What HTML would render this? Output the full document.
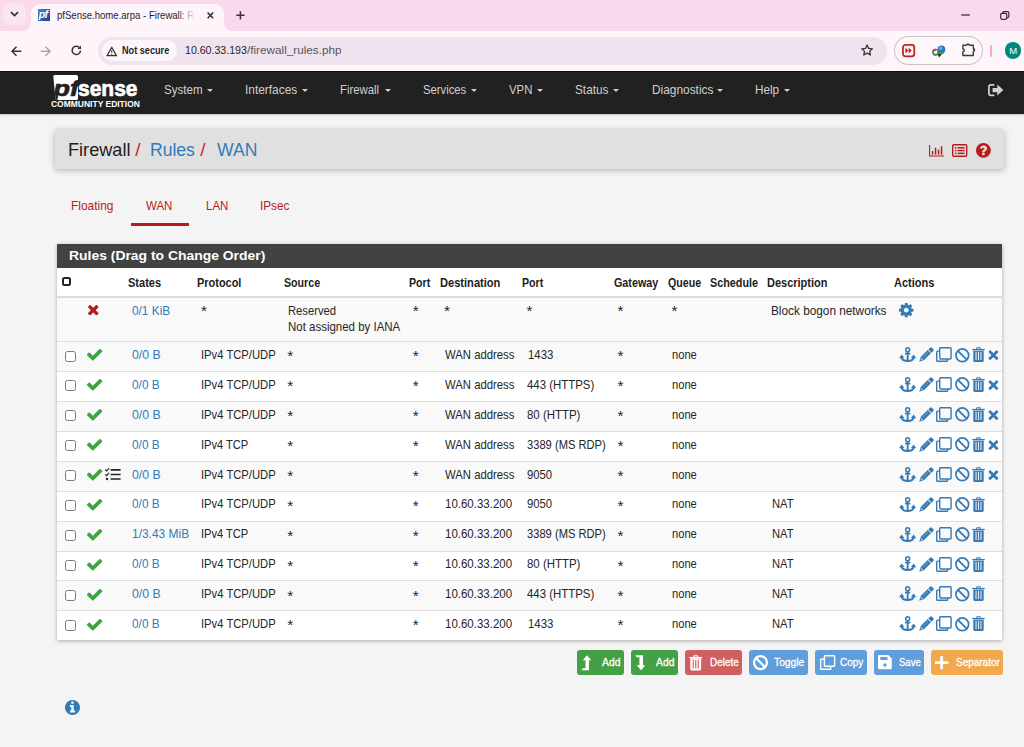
<!DOCTYPE html>
<html lang="en"><head><meta charset="utf-8"><title>pfSense.home.arpa - Firewall: Rules: WAN</title>
<style>
html,body{margin:0;padding:0}
body{width:1024px;height:747px;position:relative;overflow:hidden;background:#f4f4f4;font-family:"Liberation Sans",sans-serif;}
.t{position:absolute;white-space:pre;transform-origin:0 50%;}
.i{position:absolute;overflow:visible;display:block}
.b{position:absolute;}
/* chrome */
#strip{left:0;top:0;width:1024px;height:31px;background:#f9d9eb}
#toolbar{left:0;top:31px;width:1024px;height:40px;background:#fdf5fa;border-bottom:1.500px solid #fff;box-sizing:border-box;height:39.700px}
#tab{left:31px;top:3.700px;width:192.800px;height:27.300px;background:#fdf5fa;border-radius:9px 9px 0 0}
#tabl{left:23px;top:23px;width:8px;height:8px;background:radial-gradient(circle at 0 0,#f9d9eb 7.500px,#fdf5fa 8.200px)}
#tabr{left:223.800px;top:23px;width:8px;height:8px;background:radial-gradient(circle at 100% 0,#f9d9eb 7.500px,#fdf5fa 8.200px)}
#tsearch{left:3px;top:3px;width:23px;height:22px;border-radius:7px;background:#fbe5f1}
#omni{left:98px;top:36.500px;width:788.500px;height:28px;border-radius:14px;background:#efe3ef}
#chip{left:101.500px;top:40.200px;width:75px;height:20.600px;border-radius:10.300px;background:#fdf5fa}
#ext{left:894.500px;top:36.700px;width:87px;height:27.300px;border-radius:14px;background:#fdf6fa;box-shadow:0 0 0 1px #c9c2c6}
#avatar{left:1004.500px;top:42.200px;width:16.600px;height:16.600px;border-radius:50%;background:#00897b}
#sepv{left:990.200px;top:44.500px;width:1.300px;height:12.500px;background:#f6a9d0;border-radius:1px;width:1.600px}
/* page */
#nav{left:0;top:70.500px;width:1024px;height:43.200px;background:#212121;border-top:1px solid #0c0c0c;box-sizing:border-box;box-shadow:0 1px 2px rgba(0,0,0,.2)}
#bc{left:55.400px;top:129.800px;width:948.300px;height:39.300px;background:#e0e0e0;border-radius:3px;box-shadow:0 1px 6px rgba(0,0,0,.3)}
#tabul{left:130.500px;top:222.700px;width:58.300px;height:3.700px;background:#b71c1c}
#panel{left:56.500px;top:244px;width:945.700px;height:396.300px;background:#fff;box-shadow:0 1px 4px rgba(0,0,0,.3)}
#phead{left:56.500px;top:244px;width:945.700px;height:23.500px;background:#424242}
.row{position:absolute;left:56.500px;width:945.700px;height:30px;border-top:1px solid #ddd;box-sizing:border-box}
.g{background:#f9f9f9}
.cb{position:absolute;width:9px;height:9px;border:1px solid #7a7a7a;border-radius:2.500px;background:#fff;box-sizing:content-box}
.btn{position:absolute;top:650px;height:24.500px;border-radius:3px}
.caret{position:absolute;width:0;height:0;border-left:3.500px solid transparent;border-right:3.500px solid transparent;border-top:3.700px solid #d0d0d0;top:88.600px;margin-left:0.800px}
</style></head><body>
<!-- browser chrome -->
<div class="b" id="strip"></div>
<div class="b" id="toolbar"></div>
<div class="b" id="tsearch"></div>
<div class="b" id="tab"></div><div class="b" id="tabl"></div><div class="b" id="tabr"></div>
<div class="b" id="omni"></div><div class="b" id="chip"></div>
<div class="b" id="ext"></div><div class="b" id="sepv"></div><div class="b" id="avatar"></div>
<!-- page -->
<div class="b" id="nav"></div>
<div class="b" id="bc"></div>
<div class="b" id="tabul"></div>
<div class="b" id="panel"></div>
<div class="b" id="phead"></div>
<!--ROWS-->
<div class="row g" style="top:296px;height:45px;border-top:2px solid #ddd"></div>
<div class="row g" style="top:341.2px"></div>
<div class="cb" style="left:64.700px;top:350.5px"></div>
<div class="row" style="top:371.1px"></div>
<div class="cb" style="left:64.700px;top:380.4px"></div>
<div class="row g" style="top:401.0px"></div>
<div class="cb" style="left:64.700px;top:410.3px"></div>
<div class="row" style="top:430.9px"></div>
<div class="cb" style="left:64.700px;top:440.2px"></div>
<div class="row g" style="top:460.8px"></div>
<div class="cb" style="left:64.700px;top:470.1px"></div>
<div class="row" style="top:490.7px"></div>
<div class="cb" style="left:64.700px;top:500.0px"></div>
<div class="row g" style="top:520.6px"></div>
<div class="cb" style="left:64.700px;top:529.9px"></div>
<div class="row" style="top:550.5px"></div>
<div class="cb" style="left:64.700px;top:559.8px"></div>
<div class="row g" style="top:580.4px"></div>
<div class="cb" style="left:64.700px;top:589.7px"></div>
<div class="row" style="top:610.3px"></div>
<div class="cb" style="left:64.700px;top:619.6px"></div>
<div class="cb" style="left:62px;top:277px;width:5px;height:5px;border:2px solid #222;border-radius:2.500px"></div>
<div class="caret" style="left:206.2px"></div>
<div class="caret" style="left:301.2px"></div>
<div class="caret" style="left:384.2px"></div>
<div class="caret" style="left:470.7px"></div>
<div class="caret" style="left:536.5px"></div>
<div class="caret" style="left:612.7px"></div>
<div class="caret" style="left:716.7px"></div>
<div class="caret" style="left:783.0px"></div>
<div class="btn" style="left:576.8px;width:47.4px;background:#43a047"></div>
<div class="btn" style="left:631.0px;width:47.0px;background:#43a047"></div>
<div class="btn" style="left:685.0px;width:57.0px;background:#cf6060"></div>
<div class="btn" style="left:749.0px;width:58.7px;background:#5f9ddc"></div>
<div class="btn" style="left:815.2px;width:51.8px;background:#5f9ddc"></div>
<div class="btn" style="left:873.9px;width:50.0px;background:#5f9ddc"></div>
<div class="btn" style="left:930.8px;width:72.7px;background:#f0a94b"></div>
<svg class="i" style="left:87.50px;top:305.20px;width:10.50px;height:10.30px" viewBox="302 366 1188 1188" preserveAspectRatio="none"><path fill="#b71c1c" d="M1490 1322q0 40-28 68l-136 136q-28 28-68 28t-68-28l-294-294-294 294q-28 28-68 28t-68-28l-136-136q-28-28-28-68t28-68l294-294-294-294q-28-28-28-68t28-68l136-136q28-28 68-28t68 28l294 294 294-294q28-28 68-28t68 28l136 136q28 28 28 68t-28 68l-294 294 294 294q28 28 28 68z"/></svg>
<svg class="i" style="left:899.00px;top:303.00px;width:14.50px;height:14.30px" viewBox="128 128 1536 1536" preserveAspectRatio="none"><path fill="#337ab7" d="M1152 896q0-106-75-181t-181-75-181 75-75 181 75 181 181 75 181-75 75-181zm512-109v222q0 12-8 23t-20 13l-185 28q-19 54-39 91 35 50 107 138 10 12 10 25t-9 23q-27 37-99 108t-94 71q-12 0-26-9l-138-108q-44 23-91 38-16 136-29 186-7 28-36 28h-222q-14 0-24.500-8.500t-11.500-21.500l-28-184q-49-16-90-37l-141 107q-10 9-25 9-14 0-25-11-126-114-165-168-7-10-7-23 0-12 8-23 15-21 51-66.500t54-70.500q-27-50-41-99l-183-27q-13-2-21-12.500t-8-23.500v-222q0-12 8-23t19-13l186-28q14-46 39-92-40-57-107-138-10-12-10-24 0-10 9-23 26-36 98.500-107.500t94.500-71.500q13 0 26 10l138 107q44-23 91-38 16-136 29-186 7-28 36-28h222q14 0 24.500 8.500t11.500 21.500l28 184q49 16 90 37l142-107q9-9 24-9 13 0 25 10 129 119 165 170 7 8 7 22 0 12-8 23-15 21-51 66.500t-54 70.500q26 50 41 98l183 28q13 2 21 12.500t8 23.500z"/></svg>
<svg class="i" style="left:87.40px;top:349.40px;width:15.20px;height:11.50px" viewBox="121 334 1550 1188" preserveAspectRatio="none"><path fill="#3fa243" d="M1671 566q0 40-28 68l-724 724-136 136q-28 28-68 28t-68-28l-136-136-362-362q-28-28-28-68t28-68l136-136q28-28 68-28t68 28l294 295 656-657q28-28 68-28t68 28l136 136q28 28 28 68z"/></svg>
<svg class="i" style="left:898.80px;top:347.10px;width:17.20px;height:15.00px" viewBox="0 0 17.2 15" ><g fill="none" stroke="#337ab7"><circle cx="8.650" cy="2.700" r="1.950" stroke-width="1.500"/><path d="M8.650 4.600V14.400" stroke-width="1.900"/><path d="M6 6.550H11.300" stroke-width="1.700"/><path d="M2.500 10.300C3.100 13.400 6 14.050 8.650 14.050C11.300 14.050 14.200 13.400 14.800 10.300" stroke-width="1.900"/></g><path fill="#337ab7" d="M0 11.300L2.650 7.600L5.400 11ZM17.300 11.300L14.650 7.600L11.900 11Z"/></svg>
<svg class="i" style="left:918.60px;top:347.20px;width:15.50px;height:15.00px" viewBox="0 0 15.5 15" ><g transform="translate(0.250,14.750) rotate(-45)"><path d="M0 0L4.600 -2.300H14.200V2.300H4.600Z" fill="#337ab7"/><path d="M15.100 -2.300H17.600Q18.900 -2.300 18.900 -1V1Q18.900 2.300 17.600 2.300H15.100Z" fill="#337ab7"/><path d="M2.300 0L4.100 -0.950V0.950Z" fill="#fff"/><path d="M5.600 -0.500H13.300" stroke="#fff" stroke-width="0.600" opacity=".5"/></g></svg>
<svg class="i" style="left:936.20px;top:347.20px;width:16.00px;height:15.00px" viewBox="0 0 16 15" ><g fill="none" stroke="#337ab7" stroke-width="1.400"><rect x="3.700" y="0.700" width="11.400" height="11.300" rx="1"/><path d="M3.700 4.100H1.600Q0.700 4.100 0.700 5V13.400Q0.700 14.300 1.600 14.300H10.700Q11.600 14.300 11.600 13.400V12.100"/></g></svg>
<svg class="i" style="left:954.50px;top:347.50px;width:14.60px;height:14.60px" viewBox="0 0 14.6 14.6" ><g fill="none" stroke="#337ab7"><circle cx="7.300" cy="7.300" r="6.350" stroke-width="1.700"/><path d="M2.900 2.900L11.700 11.700" stroke-width="1.800"/></g></svg>
<svg class="i" style="left:972.20px;top:347.20px;width:13.00px;height:15.00px" viewBox="0 0 13 15" ><g fill="#337ab7"><path d="M0.300 1.900H12.700V3.200H0.300Z"/><path d="M4 1.900L4.700 0.300H8.300L9 1.900L7.900 1.900L7.600 1.200H5.400L5.100 1.900Z"/><path d="M1.300 3.200H11.700V13.600Q11.700 14.900 10.500 14.900H2.500Q1.300 14.900 1.300 13.600Z"/></g><rect x="1.300" y="3.300" width="10.400" height="0.700" fill="#fff" opacity=".55"/><g fill="#fff" opacity=".85"><rect x="3.500" y="4.800" width="1.100" height="8.300"/><rect x="5.950" y="4.800" width="1.100" height="8.300"/><rect x="8.400" y="4.800" width="1.100" height="8.300"/></g></svg>
<svg class="i" style="left:988.00px;top:350.00px;width:10.80px;height:10.20px" viewBox="0 0 10.8 10.2" ><path d="M1.200 1L9.600 9.200M9.600 1L1.200 9.200" stroke="#337ab7" stroke-width="2.700" fill="none"/></svg>
<svg class="i" style="left:87.40px;top:379.30px;width:15.20px;height:11.50px" viewBox="121 334 1550 1188" preserveAspectRatio="none"><path fill="#3fa243" d="M1671 566q0 40-28 68l-724 724-136 136q-28 28-68 28t-68-28l-136-136-362-362q-28-28-28-68t28-68l136-136q28-28 68-28t68 28l294 295 656-657q28-28 68-28t68 28l136 136q28 28 28 68z"/></svg>
<svg class="i" style="left:898.80px;top:377.00px;width:17.20px;height:15.00px" viewBox="0 0 17.2 15" ><g fill="none" stroke="#337ab7"><circle cx="8.650" cy="2.700" r="1.950" stroke-width="1.500"/><path d="M8.650 4.600V14.400" stroke-width="1.900"/><path d="M6 6.550H11.300" stroke-width="1.700"/><path d="M2.500 10.300C3.100 13.400 6 14.050 8.650 14.050C11.300 14.050 14.200 13.400 14.800 10.300" stroke-width="1.900"/></g><path fill="#337ab7" d="M0 11.300L2.650 7.600L5.400 11ZM17.300 11.300L14.650 7.600L11.900 11Z"/></svg>
<svg class="i" style="left:918.60px;top:377.10px;width:15.50px;height:15.00px" viewBox="0 0 15.5 15" ><g transform="translate(0.250,14.750) rotate(-45)"><path d="M0 0L4.600 -2.300H14.200V2.300H4.600Z" fill="#337ab7"/><path d="M15.100 -2.300H17.600Q18.900 -2.300 18.900 -1V1Q18.900 2.300 17.600 2.300H15.100Z" fill="#337ab7"/><path d="M2.300 0L4.100 -0.950V0.950Z" fill="#fff"/><path d="M5.600 -0.500H13.300" stroke="#fff" stroke-width="0.600" opacity=".5"/></g></svg>
<svg class="i" style="left:936.20px;top:377.10px;width:16.00px;height:15.00px" viewBox="0 0 16 15" ><g fill="none" stroke="#337ab7" stroke-width="1.400"><rect x="3.700" y="0.700" width="11.400" height="11.300" rx="1"/><path d="M3.700 4.100H1.600Q0.700 4.100 0.700 5V13.400Q0.700 14.300 1.600 14.300H10.700Q11.600 14.300 11.600 13.400V12.100"/></g></svg>
<svg class="i" style="left:954.50px;top:377.40px;width:14.60px;height:14.60px" viewBox="0 0 14.6 14.6" ><g fill="none" stroke="#337ab7"><circle cx="7.300" cy="7.300" r="6.350" stroke-width="1.700"/><path d="M2.900 2.900L11.700 11.700" stroke-width="1.800"/></g></svg>
<svg class="i" style="left:972.20px;top:377.10px;width:13.00px;height:15.00px" viewBox="0 0 13 15" ><g fill="#337ab7"><path d="M0.300 1.900H12.700V3.200H0.300Z"/><path d="M4 1.900L4.700 0.300H8.300L9 1.900L7.900 1.900L7.600 1.200H5.400L5.100 1.900Z"/><path d="M1.300 3.200H11.700V13.600Q11.700 14.900 10.500 14.900H2.500Q1.300 14.900 1.300 13.600Z"/></g><rect x="1.300" y="3.300" width="10.400" height="0.700" fill="#fff" opacity=".55"/><g fill="#fff" opacity=".85"><rect x="3.500" y="4.800" width="1.100" height="8.300"/><rect x="5.950" y="4.800" width="1.100" height="8.300"/><rect x="8.400" y="4.800" width="1.100" height="8.300"/></g></svg>
<svg class="i" style="left:988.00px;top:379.90px;width:10.80px;height:10.20px" viewBox="0 0 10.8 10.2" ><path d="M1.200 1L9.600 9.200M9.600 1L1.200 9.200" stroke="#337ab7" stroke-width="2.700" fill="none"/></svg>
<svg class="i" style="left:87.40px;top:409.20px;width:15.20px;height:11.50px" viewBox="121 334 1550 1188" preserveAspectRatio="none"><path fill="#3fa243" d="M1671 566q0 40-28 68l-724 724-136 136q-28 28-68 28t-68-28l-136-136-362-362q-28-28-28-68t28-68l136-136q28-28 68-28t68 28l294 295 656-657q28-28 68-28t68 28l136 136q28 28 28 68z"/></svg>
<svg class="i" style="left:898.80px;top:406.90px;width:17.20px;height:15.00px" viewBox="0 0 17.2 15" ><g fill="none" stroke="#337ab7"><circle cx="8.650" cy="2.700" r="1.950" stroke-width="1.500"/><path d="M8.650 4.600V14.400" stroke-width="1.900"/><path d="M6 6.550H11.300" stroke-width="1.700"/><path d="M2.500 10.300C3.100 13.400 6 14.050 8.650 14.050C11.300 14.050 14.200 13.400 14.800 10.300" stroke-width="1.900"/></g><path fill="#337ab7" d="M0 11.300L2.650 7.600L5.400 11ZM17.300 11.300L14.650 7.600L11.900 11Z"/></svg>
<svg class="i" style="left:918.60px;top:407.00px;width:15.50px;height:15.00px" viewBox="0 0 15.5 15" ><g transform="translate(0.250,14.750) rotate(-45)"><path d="M0 0L4.600 -2.300H14.200V2.300H4.600Z" fill="#337ab7"/><path d="M15.100 -2.300H17.600Q18.900 -2.300 18.900 -1V1Q18.900 2.300 17.600 2.300H15.100Z" fill="#337ab7"/><path d="M2.300 0L4.100 -0.950V0.950Z" fill="#fff"/><path d="M5.600 -0.500H13.300" stroke="#fff" stroke-width="0.600" opacity=".5"/></g></svg>
<svg class="i" style="left:936.20px;top:407.00px;width:16.00px;height:15.00px" viewBox="0 0 16 15" ><g fill="none" stroke="#337ab7" stroke-width="1.400"><rect x="3.700" y="0.700" width="11.400" height="11.300" rx="1"/><path d="M3.700 4.100H1.600Q0.700 4.100 0.700 5V13.400Q0.700 14.300 1.600 14.300H10.700Q11.600 14.300 11.600 13.400V12.100"/></g></svg>
<svg class="i" style="left:954.50px;top:407.30px;width:14.60px;height:14.60px" viewBox="0 0 14.6 14.6" ><g fill="none" stroke="#337ab7"><circle cx="7.300" cy="7.300" r="6.350" stroke-width="1.700"/><path d="M2.900 2.900L11.700 11.700" stroke-width="1.800"/></g></svg>
<svg class="i" style="left:972.20px;top:407.00px;width:13.00px;height:15.00px" viewBox="0 0 13 15" ><g fill="#337ab7"><path d="M0.300 1.900H12.700V3.200H0.300Z"/><path d="M4 1.900L4.700 0.300H8.300L9 1.900L7.900 1.900L7.600 1.200H5.400L5.100 1.900Z"/><path d="M1.300 3.200H11.700V13.600Q11.700 14.900 10.500 14.900H2.500Q1.300 14.900 1.300 13.600Z"/></g><rect x="1.300" y="3.300" width="10.400" height="0.700" fill="#fff" opacity=".55"/><g fill="#fff" opacity=".85"><rect x="3.500" y="4.800" width="1.100" height="8.300"/><rect x="5.950" y="4.800" width="1.100" height="8.300"/><rect x="8.400" y="4.800" width="1.100" height="8.300"/></g></svg>
<svg class="i" style="left:988.00px;top:409.80px;width:10.80px;height:10.20px" viewBox="0 0 10.8 10.2" ><path d="M1.200 1L9.600 9.200M9.600 1L1.200 9.200" stroke="#337ab7" stroke-width="2.700" fill="none"/></svg>
<svg class="i" style="left:87.40px;top:439.10px;width:15.20px;height:11.50px" viewBox="121 334 1550 1188" preserveAspectRatio="none"><path fill="#3fa243" d="M1671 566q0 40-28 68l-724 724-136 136q-28 28-68 28t-68-28l-136-136-362-362q-28-28-28-68t28-68l136-136q28-28 68-28t68 28l294 295 656-657q28-28 68-28t68 28l136 136q28 28 28 68z"/></svg>
<svg class="i" style="left:898.80px;top:436.80px;width:17.20px;height:15.00px" viewBox="0 0 17.2 15" ><g fill="none" stroke="#337ab7"><circle cx="8.650" cy="2.700" r="1.950" stroke-width="1.500"/><path d="M8.650 4.600V14.400" stroke-width="1.900"/><path d="M6 6.550H11.300" stroke-width="1.700"/><path d="M2.500 10.300C3.100 13.400 6 14.050 8.650 14.050C11.300 14.050 14.200 13.400 14.800 10.300" stroke-width="1.900"/></g><path fill="#337ab7" d="M0 11.300L2.650 7.600L5.400 11ZM17.300 11.300L14.650 7.600L11.900 11Z"/></svg>
<svg class="i" style="left:918.60px;top:436.90px;width:15.50px;height:15.00px" viewBox="0 0 15.5 15" ><g transform="translate(0.250,14.750) rotate(-45)"><path d="M0 0L4.600 -2.300H14.200V2.300H4.600Z" fill="#337ab7"/><path d="M15.100 -2.300H17.600Q18.900 -2.300 18.900 -1V1Q18.900 2.300 17.600 2.300H15.100Z" fill="#337ab7"/><path d="M2.300 0L4.100 -0.950V0.950Z" fill="#fff"/><path d="M5.600 -0.500H13.300" stroke="#fff" stroke-width="0.600" opacity=".5"/></g></svg>
<svg class="i" style="left:936.20px;top:436.90px;width:16.00px;height:15.00px" viewBox="0 0 16 15" ><g fill="none" stroke="#337ab7" stroke-width="1.400"><rect x="3.700" y="0.700" width="11.400" height="11.300" rx="1"/><path d="M3.700 4.100H1.600Q0.700 4.100 0.700 5V13.400Q0.700 14.300 1.600 14.300H10.700Q11.600 14.300 11.600 13.400V12.100"/></g></svg>
<svg class="i" style="left:954.50px;top:437.20px;width:14.60px;height:14.60px" viewBox="0 0 14.6 14.6" ><g fill="none" stroke="#337ab7"><circle cx="7.300" cy="7.300" r="6.350" stroke-width="1.700"/><path d="M2.900 2.900L11.700 11.700" stroke-width="1.800"/></g></svg>
<svg class="i" style="left:972.20px;top:436.90px;width:13.00px;height:15.00px" viewBox="0 0 13 15" ><g fill="#337ab7"><path d="M0.300 1.900H12.700V3.200H0.300Z"/><path d="M4 1.900L4.700 0.300H8.300L9 1.900L7.900 1.900L7.600 1.200H5.400L5.100 1.900Z"/><path d="M1.300 3.200H11.700V13.600Q11.700 14.900 10.500 14.900H2.500Q1.300 14.900 1.300 13.600Z"/></g><rect x="1.300" y="3.300" width="10.400" height="0.700" fill="#fff" opacity=".55"/><g fill="#fff" opacity=".85"><rect x="3.500" y="4.800" width="1.100" height="8.300"/><rect x="5.950" y="4.800" width="1.100" height="8.300"/><rect x="8.400" y="4.800" width="1.100" height="8.300"/></g></svg>
<svg class="i" style="left:988.00px;top:439.70px;width:10.80px;height:10.20px" viewBox="0 0 10.8 10.2" ><path d="M1.200 1L9.600 9.200M9.600 1L1.200 9.200" stroke="#337ab7" stroke-width="2.700" fill="none"/></svg>
<svg class="i" style="left:87.40px;top:469.00px;width:15.20px;height:11.50px" viewBox="121 334 1550 1188" preserveAspectRatio="none"><path fill="#3fa243" d="M1671 566q0 40-28 68l-724 724-136 136q-28 28-68 28t-68-28l-136-136-362-362q-28-28-28-68t28-68l136-136q28-28 68-28t68 28l294 295 656-657q28-28 68-28t68 28l136 136q28 28 28 68z"/></svg>
<svg class="i" style="left:898.80px;top:466.70px;width:17.20px;height:15.00px" viewBox="0 0 17.2 15" ><g fill="none" stroke="#337ab7"><circle cx="8.650" cy="2.700" r="1.950" stroke-width="1.500"/><path d="M8.650 4.600V14.400" stroke-width="1.900"/><path d="M6 6.550H11.300" stroke-width="1.700"/><path d="M2.500 10.300C3.100 13.400 6 14.050 8.650 14.050C11.300 14.050 14.200 13.400 14.800 10.300" stroke-width="1.900"/></g><path fill="#337ab7" d="M0 11.300L2.650 7.600L5.400 11ZM17.300 11.300L14.650 7.600L11.900 11Z"/></svg>
<svg class="i" style="left:918.60px;top:466.80px;width:15.50px;height:15.00px" viewBox="0 0 15.5 15" ><g transform="translate(0.250,14.750) rotate(-45)"><path d="M0 0L4.600 -2.300H14.200V2.300H4.600Z" fill="#337ab7"/><path d="M15.100 -2.300H17.600Q18.900 -2.300 18.900 -1V1Q18.900 2.300 17.600 2.300H15.100Z" fill="#337ab7"/><path d="M2.300 0L4.100 -0.950V0.950Z" fill="#fff"/><path d="M5.600 -0.500H13.300" stroke="#fff" stroke-width="0.600" opacity=".5"/></g></svg>
<svg class="i" style="left:936.20px;top:466.80px;width:16.00px;height:15.00px" viewBox="0 0 16 15" ><g fill="none" stroke="#337ab7" stroke-width="1.400"><rect x="3.700" y="0.700" width="11.400" height="11.300" rx="1"/><path d="M3.700 4.100H1.600Q0.700 4.100 0.700 5V13.400Q0.700 14.300 1.600 14.300H10.700Q11.600 14.300 11.600 13.400V12.100"/></g></svg>
<svg class="i" style="left:954.50px;top:467.10px;width:14.60px;height:14.60px" viewBox="0 0 14.6 14.6" ><g fill="none" stroke="#337ab7"><circle cx="7.300" cy="7.300" r="6.350" stroke-width="1.700"/><path d="M2.900 2.900L11.700 11.700" stroke-width="1.800"/></g></svg>
<svg class="i" style="left:972.20px;top:466.80px;width:13.00px;height:15.00px" viewBox="0 0 13 15" ><g fill="#337ab7"><path d="M0.300 1.900H12.700V3.200H0.300Z"/><path d="M4 1.900L4.700 0.300H8.300L9 1.900L7.900 1.900L7.600 1.200H5.400L5.100 1.900Z"/><path d="M1.300 3.200H11.700V13.600Q11.700 14.900 10.500 14.900H2.500Q1.300 14.900 1.300 13.600Z"/></g><rect x="1.300" y="3.300" width="10.400" height="0.700" fill="#fff" opacity=".55"/><g fill="#fff" opacity=".85"><rect x="3.500" y="4.800" width="1.100" height="8.300"/><rect x="5.950" y="4.800" width="1.100" height="8.300"/><rect x="8.400" y="4.800" width="1.100" height="8.300"/></g></svg>
<svg class="i" style="left:988.00px;top:469.60px;width:10.80px;height:10.20px" viewBox="0 0 10.8 10.2" ><path d="M1.200 1L9.600 9.200M9.600 1L1.200 9.200" stroke="#337ab7" stroke-width="2.700" fill="none"/></svg>
<svg class="i" style="left:87.40px;top:498.90px;width:15.20px;height:11.50px" viewBox="121 334 1550 1188" preserveAspectRatio="none"><path fill="#3fa243" d="M1671 566q0 40-28 68l-724 724-136 136q-28 28-68 28t-68-28l-136-136-362-362q-28-28-28-68t28-68l136-136q28-28 68-28t68 28l294 295 656-657q28-28 68-28t68 28l136 136q28 28 28 68z"/></svg>
<svg class="i" style="left:898.80px;top:496.60px;width:17.20px;height:15.00px" viewBox="0 0 17.2 15" ><g fill="none" stroke="#337ab7"><circle cx="8.650" cy="2.700" r="1.950" stroke-width="1.500"/><path d="M8.650 4.600V14.400" stroke-width="1.900"/><path d="M6 6.550H11.300" stroke-width="1.700"/><path d="M2.500 10.300C3.100 13.400 6 14.050 8.650 14.050C11.300 14.050 14.200 13.400 14.800 10.300" stroke-width="1.900"/></g><path fill="#337ab7" d="M0 11.300L2.650 7.600L5.400 11ZM17.300 11.300L14.650 7.600L11.900 11Z"/></svg>
<svg class="i" style="left:918.60px;top:496.70px;width:15.50px;height:15.00px" viewBox="0 0 15.5 15" ><g transform="translate(0.250,14.750) rotate(-45)"><path d="M0 0L4.600 -2.300H14.200V2.300H4.600Z" fill="#337ab7"/><path d="M15.100 -2.300H17.600Q18.900 -2.300 18.900 -1V1Q18.900 2.300 17.600 2.300H15.100Z" fill="#337ab7"/><path d="M2.300 0L4.100 -0.950V0.950Z" fill="#fff"/><path d="M5.600 -0.500H13.300" stroke="#fff" stroke-width="0.600" opacity=".5"/></g></svg>
<svg class="i" style="left:936.20px;top:496.70px;width:16.00px;height:15.00px" viewBox="0 0 16 15" ><g fill="none" stroke="#337ab7" stroke-width="1.400"><rect x="3.700" y="0.700" width="11.400" height="11.300" rx="1"/><path d="M3.700 4.100H1.600Q0.700 4.100 0.700 5V13.400Q0.700 14.300 1.600 14.300H10.700Q11.600 14.300 11.600 13.400V12.100"/></g></svg>
<svg class="i" style="left:954.50px;top:497.00px;width:14.60px;height:14.60px" viewBox="0 0 14.6 14.6" ><g fill="none" stroke="#337ab7"><circle cx="7.300" cy="7.300" r="6.350" stroke-width="1.700"/><path d="M2.900 2.900L11.700 11.700" stroke-width="1.800"/></g></svg>
<svg class="i" style="left:972.20px;top:496.70px;width:13.00px;height:15.00px" viewBox="0 0 13 15" ><g fill="#337ab7"><path d="M0.300 1.900H12.700V3.200H0.300Z"/><path d="M4 1.900L4.700 0.300H8.300L9 1.900L7.900 1.900L7.600 1.200H5.400L5.100 1.900Z"/><path d="M1.300 3.200H11.700V13.600Q11.700 14.900 10.500 14.900H2.500Q1.300 14.900 1.300 13.600Z"/></g><rect x="1.300" y="3.300" width="10.400" height="0.700" fill="#fff" opacity=".55"/><g fill="#fff" opacity=".85"><rect x="3.500" y="4.800" width="1.100" height="8.300"/><rect x="5.950" y="4.800" width="1.100" height="8.300"/><rect x="8.400" y="4.800" width="1.100" height="8.300"/></g></svg>
<svg class="i" style="left:87.40px;top:528.80px;width:15.20px;height:11.50px" viewBox="121 334 1550 1188" preserveAspectRatio="none"><path fill="#3fa243" d="M1671 566q0 40-28 68l-724 724-136 136q-28 28-68 28t-68-28l-136-136-362-362q-28-28-28-68t28-68l136-136q28-28 68-28t68 28l294 295 656-657q28-28 68-28t68 28l136 136q28 28 28 68z"/></svg>
<svg class="i" style="left:898.80px;top:526.50px;width:17.20px;height:15.00px" viewBox="0 0 17.2 15" ><g fill="none" stroke="#337ab7"><circle cx="8.650" cy="2.700" r="1.950" stroke-width="1.500"/><path d="M8.650 4.600V14.400" stroke-width="1.900"/><path d="M6 6.550H11.300" stroke-width="1.700"/><path d="M2.500 10.300C3.100 13.400 6 14.050 8.650 14.050C11.300 14.050 14.200 13.400 14.800 10.300" stroke-width="1.900"/></g><path fill="#337ab7" d="M0 11.300L2.650 7.600L5.400 11ZM17.300 11.300L14.650 7.600L11.900 11Z"/></svg>
<svg class="i" style="left:918.60px;top:526.60px;width:15.50px;height:15.00px" viewBox="0 0 15.5 15" ><g transform="translate(0.250,14.750) rotate(-45)"><path d="M0 0L4.600 -2.300H14.200V2.300H4.600Z" fill="#337ab7"/><path d="M15.100 -2.300H17.600Q18.900 -2.300 18.900 -1V1Q18.900 2.300 17.600 2.300H15.100Z" fill="#337ab7"/><path d="M2.300 0L4.100 -0.950V0.950Z" fill="#fff"/><path d="M5.600 -0.500H13.300" stroke="#fff" stroke-width="0.600" opacity=".5"/></g></svg>
<svg class="i" style="left:936.20px;top:526.60px;width:16.00px;height:15.00px" viewBox="0 0 16 15" ><g fill="none" stroke="#337ab7" stroke-width="1.400"><rect x="3.700" y="0.700" width="11.400" height="11.300" rx="1"/><path d="M3.700 4.100H1.600Q0.700 4.100 0.700 5V13.400Q0.700 14.300 1.600 14.300H10.700Q11.600 14.300 11.600 13.400V12.100"/></g></svg>
<svg class="i" style="left:954.50px;top:526.90px;width:14.60px;height:14.60px" viewBox="0 0 14.6 14.6" ><g fill="none" stroke="#337ab7"><circle cx="7.300" cy="7.300" r="6.350" stroke-width="1.700"/><path d="M2.900 2.900L11.700 11.700" stroke-width="1.800"/></g></svg>
<svg class="i" style="left:972.20px;top:526.60px;width:13.00px;height:15.00px" viewBox="0 0 13 15" ><g fill="#337ab7"><path d="M0.300 1.900H12.700V3.200H0.300Z"/><path d="M4 1.900L4.700 0.300H8.300L9 1.900L7.900 1.900L7.600 1.200H5.400L5.100 1.900Z"/><path d="M1.300 3.200H11.700V13.600Q11.700 14.900 10.500 14.900H2.500Q1.300 14.900 1.300 13.600Z"/></g><rect x="1.300" y="3.300" width="10.400" height="0.700" fill="#fff" opacity=".55"/><g fill="#fff" opacity=".85"><rect x="3.500" y="4.800" width="1.100" height="8.300"/><rect x="5.950" y="4.800" width="1.100" height="8.300"/><rect x="8.400" y="4.800" width="1.100" height="8.300"/></g></svg>
<svg class="i" style="left:87.40px;top:558.70px;width:15.20px;height:11.50px" viewBox="121 334 1550 1188" preserveAspectRatio="none"><path fill="#3fa243" d="M1671 566q0 40-28 68l-724 724-136 136q-28 28-68 28t-68-28l-136-136-362-362q-28-28-28-68t28-68l136-136q28-28 68-28t68 28l294 295 656-657q28-28 68-28t68 28l136 136q28 28 28 68z"/></svg>
<svg class="i" style="left:898.80px;top:556.40px;width:17.20px;height:15.00px" viewBox="0 0 17.2 15" ><g fill="none" stroke="#337ab7"><circle cx="8.650" cy="2.700" r="1.950" stroke-width="1.500"/><path d="M8.650 4.600V14.400" stroke-width="1.900"/><path d="M6 6.550H11.300" stroke-width="1.700"/><path d="M2.500 10.300C3.100 13.400 6 14.050 8.650 14.050C11.300 14.050 14.200 13.400 14.800 10.300" stroke-width="1.900"/></g><path fill="#337ab7" d="M0 11.300L2.650 7.600L5.400 11ZM17.300 11.300L14.650 7.600L11.900 11Z"/></svg>
<svg class="i" style="left:918.60px;top:556.50px;width:15.50px;height:15.00px" viewBox="0 0 15.5 15" ><g transform="translate(0.250,14.750) rotate(-45)"><path d="M0 0L4.600 -2.300H14.200V2.300H4.600Z" fill="#337ab7"/><path d="M15.100 -2.300H17.600Q18.900 -2.300 18.900 -1V1Q18.900 2.300 17.600 2.300H15.100Z" fill="#337ab7"/><path d="M2.300 0L4.100 -0.950V0.950Z" fill="#fff"/><path d="M5.600 -0.500H13.300" stroke="#fff" stroke-width="0.600" opacity=".5"/></g></svg>
<svg class="i" style="left:936.20px;top:556.50px;width:16.00px;height:15.00px" viewBox="0 0 16 15" ><g fill="none" stroke="#337ab7" stroke-width="1.400"><rect x="3.700" y="0.700" width="11.400" height="11.300" rx="1"/><path d="M3.700 4.100H1.600Q0.700 4.100 0.700 5V13.400Q0.700 14.300 1.600 14.300H10.700Q11.600 14.300 11.600 13.400V12.100"/></g></svg>
<svg class="i" style="left:954.50px;top:556.80px;width:14.60px;height:14.60px" viewBox="0 0 14.6 14.6" ><g fill="none" stroke="#337ab7"><circle cx="7.300" cy="7.300" r="6.350" stroke-width="1.700"/><path d="M2.900 2.900L11.700 11.700" stroke-width="1.800"/></g></svg>
<svg class="i" style="left:972.20px;top:556.50px;width:13.00px;height:15.00px" viewBox="0 0 13 15" ><g fill="#337ab7"><path d="M0.300 1.900H12.700V3.200H0.300Z"/><path d="M4 1.900L4.700 0.300H8.300L9 1.900L7.900 1.900L7.600 1.200H5.400L5.100 1.900Z"/><path d="M1.300 3.200H11.700V13.600Q11.700 14.900 10.500 14.900H2.500Q1.300 14.900 1.300 13.600Z"/></g><rect x="1.300" y="3.300" width="10.400" height="0.700" fill="#fff" opacity=".55"/><g fill="#fff" opacity=".85"><rect x="3.500" y="4.800" width="1.100" height="8.300"/><rect x="5.950" y="4.800" width="1.100" height="8.300"/><rect x="8.400" y="4.800" width="1.100" height="8.300"/></g></svg>
<svg class="i" style="left:87.40px;top:588.60px;width:15.20px;height:11.50px" viewBox="121 334 1550 1188" preserveAspectRatio="none"><path fill="#3fa243" d="M1671 566q0 40-28 68l-724 724-136 136q-28 28-68 28t-68-28l-136-136-362-362q-28-28-28-68t28-68l136-136q28-28 68-28t68 28l294 295 656-657q28-28 68-28t68 28l136 136q28 28 28 68z"/></svg>
<svg class="i" style="left:898.80px;top:586.30px;width:17.20px;height:15.00px" viewBox="0 0 17.2 15" ><g fill="none" stroke="#337ab7"><circle cx="8.650" cy="2.700" r="1.950" stroke-width="1.500"/><path d="M8.650 4.600V14.400" stroke-width="1.900"/><path d="M6 6.550H11.300" stroke-width="1.700"/><path d="M2.500 10.300C3.100 13.400 6 14.050 8.650 14.050C11.300 14.050 14.200 13.400 14.800 10.300" stroke-width="1.900"/></g><path fill="#337ab7" d="M0 11.300L2.650 7.600L5.400 11ZM17.300 11.300L14.650 7.600L11.900 11Z"/></svg>
<svg class="i" style="left:918.60px;top:586.40px;width:15.50px;height:15.00px" viewBox="0 0 15.5 15" ><g transform="translate(0.250,14.750) rotate(-45)"><path d="M0 0L4.600 -2.300H14.200V2.300H4.600Z" fill="#337ab7"/><path d="M15.100 -2.300H17.600Q18.900 -2.300 18.900 -1V1Q18.900 2.300 17.600 2.300H15.100Z" fill="#337ab7"/><path d="M2.300 0L4.100 -0.950V0.950Z" fill="#fff"/><path d="M5.600 -0.500H13.300" stroke="#fff" stroke-width="0.600" opacity=".5"/></g></svg>
<svg class="i" style="left:936.20px;top:586.40px;width:16.00px;height:15.00px" viewBox="0 0 16 15" ><g fill="none" stroke="#337ab7" stroke-width="1.400"><rect x="3.700" y="0.700" width="11.400" height="11.300" rx="1"/><path d="M3.700 4.100H1.600Q0.700 4.100 0.700 5V13.400Q0.700 14.300 1.600 14.300H10.700Q11.600 14.300 11.600 13.400V12.100"/></g></svg>
<svg class="i" style="left:954.50px;top:586.70px;width:14.60px;height:14.60px" viewBox="0 0 14.6 14.6" ><g fill="none" stroke="#337ab7"><circle cx="7.300" cy="7.300" r="6.350" stroke-width="1.700"/><path d="M2.900 2.900L11.700 11.700" stroke-width="1.800"/></g></svg>
<svg class="i" style="left:972.20px;top:586.40px;width:13.00px;height:15.00px" viewBox="0 0 13 15" ><g fill="#337ab7"><path d="M0.300 1.900H12.700V3.200H0.300Z"/><path d="M4 1.900L4.700 0.300H8.300L9 1.900L7.900 1.900L7.600 1.200H5.400L5.100 1.900Z"/><path d="M1.300 3.200H11.700V13.600Q11.700 14.900 10.500 14.900H2.500Q1.300 14.900 1.300 13.600Z"/></g><rect x="1.300" y="3.300" width="10.400" height="0.700" fill="#fff" opacity=".55"/><g fill="#fff" opacity=".85"><rect x="3.500" y="4.800" width="1.100" height="8.300"/><rect x="5.950" y="4.800" width="1.100" height="8.300"/><rect x="8.400" y="4.800" width="1.100" height="8.300"/></g></svg>
<svg class="i" style="left:87.40px;top:618.50px;width:15.20px;height:11.50px" viewBox="121 334 1550 1188" preserveAspectRatio="none"><path fill="#3fa243" d="M1671 566q0 40-28 68l-724 724-136 136q-28 28-68 28t-68-28l-136-136-362-362q-28-28-28-68t28-68l136-136q28-28 68-28t68 28l294 295 656-657q28-28 68-28t68 28l136 136q28 28 28 68z"/></svg>
<svg class="i" style="left:898.80px;top:616.20px;width:17.20px;height:15.00px" viewBox="0 0 17.2 15" ><g fill="none" stroke="#337ab7"><circle cx="8.650" cy="2.700" r="1.950" stroke-width="1.500"/><path d="M8.650 4.600V14.400" stroke-width="1.900"/><path d="M6 6.550H11.300" stroke-width="1.700"/><path d="M2.500 10.300C3.100 13.400 6 14.050 8.650 14.050C11.300 14.050 14.200 13.400 14.800 10.300" stroke-width="1.900"/></g><path fill="#337ab7" d="M0 11.300L2.650 7.600L5.400 11ZM17.300 11.300L14.650 7.600L11.900 11Z"/></svg>
<svg class="i" style="left:918.60px;top:616.30px;width:15.50px;height:15.00px" viewBox="0 0 15.5 15" ><g transform="translate(0.250,14.750) rotate(-45)"><path d="M0 0L4.600 -2.300H14.200V2.300H4.600Z" fill="#337ab7"/><path d="M15.100 -2.300H17.600Q18.900 -2.300 18.900 -1V1Q18.900 2.300 17.600 2.300H15.100Z" fill="#337ab7"/><path d="M2.300 0L4.100 -0.950V0.950Z" fill="#fff"/><path d="M5.600 -0.500H13.300" stroke="#fff" stroke-width="0.600" opacity=".5"/></g></svg>
<svg class="i" style="left:936.20px;top:616.30px;width:16.00px;height:15.00px" viewBox="0 0 16 15" ><g fill="none" stroke="#337ab7" stroke-width="1.400"><rect x="3.700" y="0.700" width="11.400" height="11.300" rx="1"/><path d="M3.700 4.100H1.600Q0.700 4.100 0.700 5V13.400Q0.700 14.300 1.600 14.300H10.700Q11.600 14.300 11.600 13.400V12.100"/></g></svg>
<svg class="i" style="left:954.50px;top:616.60px;width:14.60px;height:14.60px" viewBox="0 0 14.6 14.6" ><g fill="none" stroke="#337ab7"><circle cx="7.300" cy="7.300" r="6.350" stroke-width="1.700"/><path d="M2.900 2.900L11.700 11.700" stroke-width="1.800"/></g></svg>
<svg class="i" style="left:972.20px;top:616.30px;width:13.00px;height:15.00px" viewBox="0 0 13 15" ><g fill="#337ab7"><path d="M0.300 1.900H12.700V3.200H0.300Z"/><path d="M4 1.900L4.700 0.300H8.300L9 1.900L7.900 1.900L7.600 1.200H5.400L5.100 1.900Z"/><path d="M1.300 3.200H11.700V13.600Q11.700 14.900 10.500 14.900H2.500Q1.300 14.900 1.300 13.600Z"/></g><rect x="1.300" y="3.300" width="10.400" height="0.700" fill="#fff" opacity=".55"/><g fill="#fff" opacity=".85"><rect x="3.500" y="4.800" width="1.100" height="8.300"/><rect x="5.950" y="4.800" width="1.100" height="8.300"/><rect x="8.400" y="4.800" width="1.100" height="8.300"/></g></svg>
<svg class="i" style="left:976.00px;top:143.20px;width:14.80px;height:14.80px" viewBox="128 128 1536 1536" preserveAspectRatio="none"><path fill="#b71c1c" d="M1024 1376v-192q0-14-9-23t-23-9h-192q-14 0-23 9t-9 23v192q0 14 9 23t23 9h192q14 0 23-9t9-23zm256-672q0-88-55.500-163t-138.500-116-170-41q-243 0-371 213-15 24 8 42l132 100q7 6 19 6 16 0 25-12 53-68 86-92 34-24 86-24 48 0 85.500 26t37.500 59q0 38-20 61t-68 45q-63 28-115.500 86.500t-52.500 125.500v36q0 14 9 23t23 9h192q14 0 23-9t9-23q0-19 21.500-49.500t54.500-49.500q32-18 49-28.500t46-35 44.500-48 28-60.500 12.500-81zm384 192q0 209-103 385.500t-279.500 279.500-385.500 103-385.500-103-279.500-279.500-103-385.500 103-385.500 279.500-279.500 385.500-103 385.500 103 279.500 279.500 103 385.500z"/></svg>
<svg class="i" style="left:64.50px;top:699.50px;width:15.00px;height:15.00px" viewBox="128 128 1536 1536" preserveAspectRatio="none"><path fill="#337ab7" d="M1152 1376v-160q0-14-9-23t-23-9h-96v-512q0-14-9-23t-23-9h-320q-14 0-23 9t-9 23v160q0 14 9 23t23 9h96v320h-96q-14 0-23 9t-9 23v160q0 14 9 23t23 9h448q14 0 23-9t9-23zm-128-896v-160q0-14-9-23t-23-9h-192q-14 0-23 9t-9 23v160q0 14 9 23t23 9h192q14 0 23-9t9-23zm640 416q0 209-103 385.500t-279.500 279.500-385.500 103-385.500-103-279.500-279.500-103-385.500 103-385.500 279.500-279.500 385.500-103 385.500 103 279.500 279.500 103 385.500z"/></svg>
<svg class="i" style="left:105.40px;top:468.20px;width:16.00px;height:13.00px" viewBox="0 0 16 13" ><g stroke="#222" stroke-width="1.7" fill="none"><path d="M5.600 1.900H15.600M5.600 6.500H15.600M5.600 11H15.600"/></g><g stroke="#222" stroke-width="1.200" fill="none"><path d="M0.300 1.700L1.600 3L4.100 0.300M0.300 6.300L1.600 7.600L4.100 4.900"/></g><circle cx="2" cy="11" r="1.200" fill="#222"/></svg>
<svg class="i" style="left:929.00px;top:144.50px;width:15.00px;height:12.00px" viewBox="0 0 15 12" ><g fill="#b71c1c"><path d="M0 0H1.100V10.500H15V11.600H0Z"/><rect x="2.800" y="6" width="1.500" height="3.600"/><rect x="5.800" y="2.800" width="1.500" height="6.800"/><rect x="8.800" y="4.600" width="1.500" height="5"/><rect x="11.800" y="1.200" width="1.500" height="8.400"/></g></svg>
<svg class="i" style="left:952.30px;top:144.00px;width:15.40px;height:13.00px" viewBox="0 0 15.4 13" ><rect x="0.700" y="0.700" width="14" height="11.600" rx="1.200" fill="none" stroke="#b71c1c" stroke-width="1.400"/><g fill="#b71c1c"><rect x="2.900" y="3" width="1.600" height="1.500"/><rect x="2.900" y="5.800" width="1.600" height="1.500"/><rect x="2.900" y="8.600" width="1.600" height="1.500"/><rect x="5.600" y="3" width="7" height="1.500"/><rect x="5.600" y="5.800" width="7" height="1.500"/><rect x="5.600" y="8.600" width="7" height="1.500"/></g></svg>
<svg class="i" style="left:987.50px;top:83.80px;width:15.60px;height:12.20px" viewBox="0 0 15.6 12.2" ><path d="M5.600 0.900H3Q0.900 0.900 0.900 3V9.200Q0.900 11.300 3 11.300H5.600" fill="none" stroke="#cfcfcf" stroke-width="1.800" stroke-linecap="round"/><path d="M4.600 3.900H9.300V0.600L15.400 6.100L9.300 11.600V8.300H4.600Z" fill="#cfcfcf"/></svg>
<svg class="i" style="left:581.00px;top:654.50px;width:11.00px;height:15.50px" viewBox="0 0 11 15.5" ><path fill="#fff" d="M6 0.200L10.300 5.200H7.900V15.300H0.300L1.900 13.300H4.500V5.200H1.700Z"/></svg>
<svg class="i" style="left:635.00px;top:654.50px;width:11.00px;height:15.50px" viewBox="0 0 11 15.500" ><path fill="#fff" d="M0.200 0.200H8V10.300H10.300L6.100 15.300L1.700 10.300H4.400V2.200H1.800Z"/></svg>
<svg class="i" style="left:689.00px;top:654.50px;width:13.50px;height:15.50px" viewBox="0 0 13 15" preserveAspectRatio="none"><g fill="#fff"><path d="M0.300 1.900H12.700V3.200H0.300Z"/><path d="M4 1.900L4.700 0.300H8.300L9 1.900L7.900 1.900L7.600 1.200H5.400L5.100 1.900Z"/><path d="M1.300 3.200H11.700V13.600Q11.700 14.900 10.500 14.900H2.500Q1.300 14.900 1.300 13.600Z"/></g><g fill="#cf6060"><rect x="3.500" y="4.800" width="1.100" height="8.300"/><rect x="5.950" y="4.800" width="1.100" height="8.300"/><rect x="8.400" y="4.800" width="1.100" height="8.300"/></g></svg>
<svg class="i" style="left:753.40px;top:654.80px;width:15.00px;height:15.20px" viewBox="128 123 1536 1541" preserveAspectRatio="none"><path fill="#fff" d="M1440 893q0-161-87-295l-754 753q137 89 297 89 111 0 211.500-43.500t173.500-116.500 116-174.500 43-212.500zm-999 299l755-754q-135-91-300-91-148 0-273 73t-198 199-73 274q0 162 89 299zm1223-299q0 157-61 300t-163.500 246-245 164-298.500 61-298.500-61-245-164-163.500-246-61-300 61-299.500 163.500-245.500 245-164 298.500-61 298.500 61 245 164 163.500 245.500 61 299.500z" transform="translate(0,1787) scale(1,-1)"/></svg>
<svg class="i" style="left:819.50px;top:655.00px;width:15.30px;height:15.00px" viewBox="0 0 16 15" preserveAspectRatio="none"><g fill="none" stroke="#fff" stroke-width="1.5"><rect x="4.600" y="0.650" width="10.700" height="10.700" rx="0.800"/><path d="M4.600 4H1.500Q0.700 4 0.700 4.800V13.600Q0.700 14.350 1.500 14.350H10.400Q11.200 14.350 11.200 13.600V11.400"/></g></svg>
<svg class="i" style="left:878.00px;top:655.00px;width:13.80px;height:14.20px" viewBox="0 0 13.8 14.2" ><path fill="#fff" d="M1.200 0H10.300L13.800 3.500V13Q13.800 14.200 12.600 14.200H1.200Q0 14.200 0 13V1.200Q0 0 1.200 0Z"/><rect x="2.300" y="2" width="7.200" height="3" fill="#5f9ddc"/><circle cx="6.900" cy="10" r="1.700" fill="#5f9ddc"/></svg>
<svg class="i" style="left:935.30px;top:655.80px;width:13.40px;height:13.20px" viewBox="0 0 13.4 13.2" ><path d="M6.700 0V13.200M0 6.600H13.400" stroke="#fff" stroke-width="2.700" fill="none"/></svg>
<svg class="i" style="left:10.00px;top:11.00px;width:9.00px;height:6.00px" viewBox="0 0 9 6" ><path d="M1 1.200L4.500 4.600L8 1.200" fill="none" stroke="#333333" stroke-width="1.7" /></svg>
<svg class="i" style="left:38.00px;top:9.00px;width:12.00px;height:12.00px" viewBox="0 0 12 12" ><defs><linearGradient id="fg" x1="0" y1="0" x2="1" y2="1"><stop offset="0" stop-color="#3c8bd9"/><stop offset="1" stop-color="#1d3f8f"/></linearGradient></defs><rect width="12" height="12" fill="url(#fg)"/><text x="0.800" y="9.200" font-family="Liberation Sans, sans-serif" font-size="10.500" font-weight="700" font-style="italic" fill="#fff" letter-spacing="-0.600">pf</text></svg>
<svg class="i" style="left:207.00px;top:12.00px;width:7.00px;height:7.00px" viewBox="0 0 7 7" ><path d="M0.600 0.600L6.200 6.200M6.200 0.600L0.600 6.200" fill="none" stroke="#333333" stroke-width="1.5" /></svg>
<svg class="i" style="left:236.00px;top:11.00px;width:9.00px;height:9.00px" viewBox="0 0 9 9" ><path d="M4.400 0.200V8.400M0.300 4.300H8.500" fill="none" stroke="#333333" stroke-width="1.5" /></svg>
<svg class="i" style="left:11.00px;top:45.50px;width:11.00px;height:11.00px" viewBox="0 0 11 11" ><path d="M10.300 5.300H1.200M5.500 0.800L1 5.300L5.500 9.800" fill="none" stroke="#333333" stroke-width="1.5" /></svg>
<svg class="i" style="left:40.00px;top:45.50px;width:11.00px;height:11.00px" viewBox="0 0 11 11" ><path d="M0.700 5.300H9.800M5.500 0.800L10 5.300L5.500 9.800" fill="none" stroke="#a9a3a7" stroke-width="1.5" /></svg>
<svg class="i" style="left:70.50px;top:45.00px;width:11.00px;height:11.00px" viewBox="0 0 11 11" ><path d="M9.500 5.500A4.200 4.200 0 1 1 8.200 2.300" fill="none" stroke="#333" stroke-width="1.500"/><path d="M10 0.500V4H6.500Z" fill="#333"/></svg>
<svg class="i" style="left:105.50px;top:45.50px;width:11.50px;height:10.50px" viewBox="0 0 11.5 10.5" ><path d="M5.750 1.300L10.500 9.700H1Z" fill="none" stroke="#333" stroke-width="1.300" stroke-linejoin="round"/><path d="M5.750 4.200V6.800M5.750 7.700V8.700" stroke="#333" stroke-width="1.100"/></svg>
<svg class="i" style="left:861.00px;top:43.80px;width:12.20px;height:11.80px" viewBox="0 0 12.4 12" ><path d="M6.200 1L7.800 4.500L11.600 4.900L8.800 7.500L9.600 11.200L6.200 9.300L2.800 11.200L3.600 7.500L0.800 4.900L4.600 4.500Z" fill="none" stroke="#333" stroke-width="1.300" stroke-linejoin="round"/></svg>
<svg class="i" style="left:901.80px;top:43.80px;width:13.20px;height:13.20px" viewBox="0 0 13.2 13.2" ><rect x="0.900" y="0.900" width="11.400" height="11.400" rx="2.600" fill="#fdf6fa" stroke="#c5221f" stroke-width="1.800"/><path d="M3.400 3.700L6.500 6.600L3.400 9.500ZM6.700 3.700L9.800 6.600L6.700 9.500Z" fill="#c5221f"/></svg>
<svg class="i" style="left:931.50px;top:44.50px;width:14.00px;height:13.00px" viewBox="0 0 14 13" ><circle cx="3.600" cy="7.300" r="2.600" fill="none" stroke="#3a7bd0" stroke-width="1.700"/><path d="M1.200 6.300A2.600 2.600 0 0 1 4.600 4.900" fill="none" stroke="#d8402c" stroke-width="1.700"/><path d="M1.300 8.500A2.600 2.600 0 0 0 4.800 9.600" fill="none" stroke="#3da53d" stroke-width="1.700"/><path d="M4.400 4.900A2.600 2.600 0 0 1 6 6.400" fill="none" stroke="#e8b030" stroke-width="1.500"/><circle cx="9.400" cy="4.300" r="3.900" fill="#2f6fc4"/><circle cx="8.600" cy="3.300" r="2" fill="#6fb0ea" opacity=".8"/><path d="M5.200 5.800Q8 8.800 12.800 6.600L11.600 8.800Q8 10.200 5.400 8.200Z" fill="#35b335"/><path d="M5.600 8.600L9.800 9.300L7 12.600Z" fill="#2a2a2a"/></svg>
<svg class="i" style="left:962.00px;top:43.30px;width:14.00px;height:13.30px" viewBox="0 0 14 13.3" ><path d="M0.900 2.300H4.700A1.300 1.300 0 0 1 7.300 2.300H11.300V5.800A1.300 1.300 0 0 1 11.300 8.400V12.500H0.900V8.800A1.400 1.400 0 0 0 0.900 6Z" fill="none" stroke="#3c3c3c" stroke-width="1.400" stroke-linejoin="round"/><path d="M11.300 5.800A1.300 1.300 0 0 1 11.300 8.400Z" fill="#3c3c3c"/></svg>
<svg class="i" style="left:961.00px;top:14.30px;width:9.00px;height:2.00px" viewBox="0 0 9 2" ><path d="M0.300 1H8.800" fill="none" stroke="#333333" stroke-width="1.3" /></svg>
<svg class="i" style="left:999.50px;top:10.50px;width:9.50px;height:9.00px" viewBox="0 0 9.5 9" ><rect x="0.700" y="2.300" width="6" height="6" rx="1.200" fill="none" stroke="#333" stroke-width="1.200"/><path d="M2.700 2V1.800Q2.700 0.700 3.800 0.700H7.600Q8.800 0.700 8.800 1.800V5.500Q8.800 6.600 7.700 6.600H7" fill="none" stroke="#333" stroke-width="1.200"/></svg>
<svg class="i" style="left:52.50px;top:75.00px;width:25.00px;height:25.00px" viewBox="0 0 25 25" ><defs><clipPath id="lc"><path d="M1.800 0H23.500Q25 0 25 1.500V23.500Q25 25 23.500 25H4.200Q2.700 25 2.500 23.500L0.300 1.600Q0.200 0 1.800 0Z"/></clipPath></defs><path d="M1.800 0H23.500Q25 0 25 1.500V23.500Q25 25 23.500 25H4.200Q2.700 25 2.500 23.500L0.300 1.600Q0.200 0 1.800 0Z" fill="#fff"/><g clip-path="url(#lc)"><text x="0.600" y="20.600" font-family="Liberation Sans, sans-serif" font-size="22.500" font-weight="700" font-style="italic" fill="#212121" stroke="#212121" stroke-width="0.700" textLength="25.500" lengthAdjust="spacingAndGlyphs">pf</text></g></svg>
<div class="sec browser">
<span class="t" style="left:57.32px;top:11.00px;font-size:10.4px;line-height:10.4px;color:#1f1f1f;transform:scaleX(0.9199);">pfSense.home.arpa - Firewall: R</span>
<span class="t" style="left:121.53px;top:46.00px;font-size:10.4px;line-height:10.4px;color:#1f1f1f;font-weight:700;transform:scaleX(0.8795);">Not secure</span>
<span class="t" style="left:184.78px;top:45.00px;font-size:11px;line-height:11px;color:#1f1f1f;transform:scaleX(0.9628);">10.60.33.193</span>
<span class="t" style="left:246.93px;top:45.00px;font-size:11px;line-height:11px;color:#5a5558;transform:scaleX(1.0663);">/firewall_rules.php</span>
<span class="t" style="left:1009.22px;top:46.00px;font-size:9.5px;line-height:9.5px;color:#ffffff;">M</span>
</div>
<div class="sec navbar">
<span class="t" style="left:163.74px;top:84.00px;font-size:12.6px;line-height:12.6px;color:#d0d0d0;transform:scaleX(0.9221);">System</span>
<span class="t" style="left:245.22px;top:84.00px;font-size:12.6px;line-height:12.6px;color:#d0d0d0;transform:scaleX(0.9447);">Interfaces</span>
<span class="t" style="left:340.05px;top:84.00px;font-size:12.6px;line-height:12.6px;color:#d0d0d0;transform:scaleX(0.9018);">Firewall</span>
<span class="t" style="left:422.55px;top:84.00px;font-size:12.6px;line-height:12.6px;color:#d0d0d0;transform:scaleX(0.8953);">Services</span>
<span class="t" style="left:509.24px;top:84.00px;font-size:12.6px;line-height:12.6px;color:#d0d0d0;transform:scaleX(0.9037);">VPN</span>
<span class="t" style="left:575.03px;top:84.00px;font-size:12.6px;line-height:12.6px;color:#d0d0d0;transform:scaleX(0.9367);">Status</span>
<span class="t" style="left:651.52px;top:84.00px;font-size:12.6px;line-height:12.6px;color:#d0d0d0;transform:scaleX(0.9438);">Diagnostics</span>
<span class="t" style="left:755.03px;top:84.00px;font-size:12.6px;line-height:12.6px;color:#d0d0d0;transform:scaleX(0.9318);">Help</span>
<span class="t" style="left:50.86px;top:100.00px;font-size:8.3px;line-height:8.3px;color:#ffffff;font-weight:700;transform:scaleX(1.0220);">COMMUNITY EDITION</span>
<span class="t" style="left:78.36px;top:78.00px;font-size:22.5px;line-height:22.5px;color:#ffffff;font-weight:700;-webkit-text-stroke:0.700px #fff;transform:scaleX(0.9321);">sense</span>
</div>
<div class="sec breadcrumb">
<span class="t" style="left:68.27px;top:140.00px;font-size:19px;line-height:19px;color:#212121;transform:scaleX(0.9541);">Firewall</span>
<span class="t" style="left:135.24px;top:140.00px;font-size:19px;line-height:19px;color:#c62828;">/</span>
<span class="t" style="left:149.70px;top:140.00px;font-size:19px;line-height:19px;color:#337ab7;transform:scaleX(0.9244);">Rules</span>
<span class="t" style="left:200.24px;top:140.00px;font-size:19px;line-height:19px;color:#c62828;">/</span>
<span class="t" style="left:216.80px;top:140.00px;font-size:19px;line-height:19px;color:#337ab7;transform:scaleX(0.9263);">WAN</span>
</div>
<div class="sec tabs">
<span class="t" style="left:71.02px;top:200.00px;font-size:12.4px;line-height:12.4px;color:#b71c1c;transform:scaleX(0.9628);">Floating</span>
<span class="t" style="left:146.04px;top:200.00px;font-size:12.4px;line-height:12.4px;color:#b71c1c;transform:scaleX(0.9286);">WAN</span>
<span class="t" style="left:205.54px;top:200.00px;font-size:12.4px;line-height:12.4px;color:#b71c1c;transform:scaleX(0.9300);">LAN</span>
<span class="t" style="left:259.73px;top:200.00px;font-size:12.4px;line-height:12.4px;color:#b71c1c;transform:scaleX(0.9497);">IPsec</span>
</div>
<div class="sec panel-heading">
<span class="t" style="left:69.24px;top:249.00px;font-size:13px;line-height:13px;color:#ffffff;font-weight:700;transform:scaleX(1.0700);">Rules (Drag to Change Order)</span>
</div>
<div class="sec table-head">
<span class="t" style="left:127.56px;top:277.00px;font-size:12.3px;line-height:12.3px;color:#212121;font-weight:700;transform:scaleX(0.8966);">States</span>
<span class="t" style="left:197.06px;top:277.00px;font-size:12.3px;line-height:12.3px;color:#212121;font-weight:700;transform:scaleX(0.8897);">Protocol</span>
<span class="t" style="left:283.57px;top:277.00px;font-size:12.3px;line-height:12.3px;color:#212121;font-weight:700;transform:scaleX(0.8650);">Source</span>
<span class="t" style="left:409.08px;top:277.00px;font-size:12.3px;line-height:12.3px;color:#212121;font-weight:700;transform:scaleX(0.8626);">Port</span>
<span class="t" style="left:439.56px;top:277.00px;font-size:12.3px;line-height:12.3px;color:#212121;font-weight:700;transform:scaleX(0.9017);">Destination</span>
<span class="t" style="left:522.08px;top:277.00px;font-size:12.3px;line-height:12.3px;color:#212121;font-weight:700;transform:scaleX(0.8626);">Port</span>
<span class="t" style="left:613.57px;top:277.00px;font-size:12.3px;line-height:12.3px;color:#212121;font-weight:700;transform:scaleX(0.8736);">Gateway</span>
<span class="t" style="left:667.57px;top:277.00px;font-size:12.3px;line-height:12.3px;color:#212121;font-weight:700;transform:scaleX(0.8640);">Queue</span>
<span class="t" style="left:709.57px;top:277.00px;font-size:12.3px;line-height:12.3px;color:#212121;font-weight:700;transform:scaleX(0.8795);">Schedule</span>
<span class="t" style="left:767.06px;top:277.00px;font-size:12.3px;line-height:12.3px;color:#212121;font-weight:700;transform:scaleX(0.8924);">Description</span>
<span class="t" style="left:894.06px;top:277.00px;font-size:12.3px;line-height:12.3px;color:#212121;font-weight:700;transform:scaleX(0.8955);">Actions</span>
</div>
<div class="sec table-body">
<span class="t" style="left:132.03px;top:305.00px;font-size:12.4px;line-height:12.4px;color:#337ab7;transform:scaleX(0.9553);">0/1 KiB</span>
<span class="t" style="left:200.99px;top:303.00px;font-size:15.3px;line-height:15.3px;color:#262626;">*</span>
<span class="t" style="left:287.55px;top:305.00px;font-size:12.4px;line-height:12.4px;color:#262626;transform:scaleX(0.9073);">Reserved</span>
<span class="t" style="left:287.54px;top:321.00px;font-size:12.4px;line-height:12.4px;color:#262626;transform:scaleX(0.9259);">Not assigned by IANA</span>
<span class="t" style="left:412.69px;top:303.00px;font-size:15.3px;line-height:15.3px;color:#262626;">*</span>
<span class="t" style="left:443.99px;top:303.00px;font-size:15.3px;line-height:15.3px;color:#262626;">*</span>
<span class="t" style="left:526.49px;top:303.00px;font-size:15.3px;line-height:15.3px;color:#262626;">*</span>
<span class="t" style="left:617.49px;top:303.00px;font-size:15.3px;line-height:15.3px;color:#262626;">*</span>
<span class="t" style="left:671.49px;top:303.00px;font-size:15.3px;line-height:15.3px;color:#262626;">*</span>
<span class="t" style="left:771.03px;top:305.00px;font-size:12.4px;line-height:12.4px;color:#262626;transform:scaleX(0.9522);">Block bogon networks</span>
<span class="t" style="left:131.81px;top:349.00px;font-size:12.4px;line-height:12.4px;color:#337ab7;transform:scaleX(0.9912);">0/0 B</span>
<span class="t" style="left:201.25px;top:349.00px;font-size:12.4px;line-height:12.4px;color:#262626;transform:scaleX(0.9065);">IPv4 TCP/UDP</span>
<span class="t" style="left:287.19px;top:348.00px;font-size:15.3px;line-height:15.3px;color:#262626;">*</span>
<span class="t" style="left:412.69px;top:348.00px;font-size:15.3px;line-height:15.3px;color:#262626;">*</span>
<span class="t" style="left:444.55px;top:349.00px;font-size:12.4px;line-height:12.4px;color:#262626;transform:scaleX(0.9135);">WAN address</span>
<span class="t" style="left:527.54px;top:349.00px;font-size:12.4px;line-height:12.4px;color:#262626;transform:scaleX(0.9215);">1433</span>
<span class="t" style="left:617.39px;top:348.00px;font-size:15.3px;line-height:15.3px;color:#262626;">*</span>
<span class="t" style="left:672.15px;top:349.00px;font-size:12.4px;line-height:12.4px;color:#262626;transform:scaleX(0.8984);">none</span>
<span class="t" style="left:131.83px;top:379.00px;font-size:12.4px;line-height:12.4px;color:#337ab7;transform:scaleX(0.9557);">0/0 B</span>
<span class="t" style="left:201.25px;top:379.00px;font-size:12.4px;line-height:12.4px;color:#262626;transform:scaleX(0.9065);">IPv4 TCP/UDP</span>
<span class="t" style="left:287.19px;top:378.00px;font-size:15.3px;line-height:15.3px;color:#262626;">*</span>
<span class="t" style="left:412.69px;top:378.00px;font-size:15.3px;line-height:15.3px;color:#262626;">*</span>
<span class="t" style="left:444.55px;top:379.00px;font-size:12.4px;line-height:12.4px;color:#262626;transform:scaleX(0.9135);">WAN address</span>
<span class="t" style="left:527.04px;top:379.00px;font-size:12.4px;line-height:12.4px;color:#262626;transform:scaleX(0.9209);">443 (HTTPS)</span>
<span class="t" style="left:617.39px;top:378.00px;font-size:15.3px;line-height:15.3px;color:#262626;">*</span>
<span class="t" style="left:672.15px;top:379.00px;font-size:12.4px;line-height:12.4px;color:#262626;transform:scaleX(0.8984);">none</span>
<span class="t" style="left:131.81px;top:409.00px;font-size:12.4px;line-height:12.4px;color:#337ab7;transform:scaleX(0.9912);">0/0 B</span>
<span class="t" style="left:201.25px;top:409.00px;font-size:12.4px;line-height:12.4px;color:#262626;transform:scaleX(0.9065);">IPv4 TCP/UDP</span>
<span class="t" style="left:287.19px;top:408.00px;font-size:15.3px;line-height:15.3px;color:#262626;">*</span>
<span class="t" style="left:412.69px;top:408.00px;font-size:15.3px;line-height:15.3px;color:#262626;">*</span>
<span class="t" style="left:444.55px;top:409.00px;font-size:12.4px;line-height:12.4px;color:#262626;transform:scaleX(0.9135);">WAN address</span>
<span class="t" style="left:527.04px;top:409.00px;font-size:12.4px;line-height:12.4px;color:#262626;transform:scaleX(0.9237);">80 (HTTP)</span>
<span class="t" style="left:617.39px;top:408.00px;font-size:15.3px;line-height:15.3px;color:#262626;">*</span>
<span class="t" style="left:672.15px;top:409.00px;font-size:12.4px;line-height:12.4px;color:#262626;transform:scaleX(0.8984);">none</span>
<span class="t" style="left:131.83px;top:439.00px;font-size:12.4px;line-height:12.4px;color:#337ab7;transform:scaleX(0.9557);">0/0 B</span>
<span class="t" style="left:201.26px;top:439.00px;font-size:12.4px;line-height:12.4px;color:#262626;transform:scaleX(0.8937);">IPv4 TCP</span>
<span class="t" style="left:287.19px;top:438.00px;font-size:15.3px;line-height:15.3px;color:#262626;">*</span>
<span class="t" style="left:412.69px;top:438.00px;font-size:15.3px;line-height:15.3px;color:#262626;">*</span>
<span class="t" style="left:444.55px;top:439.00px;font-size:12.4px;line-height:12.4px;color:#262626;transform:scaleX(0.9135);">WAN address</span>
<span class="t" style="left:527.05px;top:439.00px;font-size:12.4px;line-height:12.4px;color:#262626;transform:scaleX(0.9005);">3389 (MS RDP)</span>
<span class="t" style="left:617.39px;top:438.00px;font-size:15.3px;line-height:15.3px;color:#262626;">*</span>
<span class="t" style="left:672.15px;top:439.00px;font-size:12.4px;line-height:12.4px;color:#262626;transform:scaleX(0.8984);">none</span>
<span class="t" style="left:131.81px;top:469.00px;font-size:12.4px;line-height:12.4px;color:#337ab7;transform:scaleX(0.9912);">0/0 B</span>
<span class="t" style="left:201.25px;top:469.00px;font-size:12.4px;line-height:12.4px;color:#262626;transform:scaleX(0.9065);">IPv4 TCP/UDP</span>
<span class="t" style="left:287.19px;top:468.00px;font-size:15.3px;line-height:15.3px;color:#262626;">*</span>
<span class="t" style="left:412.69px;top:468.00px;font-size:15.3px;line-height:15.3px;color:#262626;">*</span>
<span class="t" style="left:444.55px;top:469.00px;font-size:12.4px;line-height:12.4px;color:#262626;transform:scaleX(0.9135);">WAN address</span>
<span class="t" style="left:527.05px;top:469.00px;font-size:12.4px;line-height:12.4px;color:#262626;transform:scaleX(0.9114);">9050</span>
<span class="t" style="left:617.39px;top:468.00px;font-size:15.3px;line-height:15.3px;color:#262626;">*</span>
<span class="t" style="left:672.15px;top:469.00px;font-size:12.4px;line-height:12.4px;color:#262626;transform:scaleX(0.8984);">none</span>
<span class="t" style="left:131.83px;top:498.00px;font-size:12.4px;line-height:12.4px;color:#337ab7;transform:scaleX(0.9557);">0/0 B</span>
<span class="t" style="left:201.25px;top:498.00px;font-size:12.4px;line-height:12.4px;color:#262626;transform:scaleX(0.9065);">IPv4 TCP/UDP</span>
<span class="t" style="left:287.19px;top:498.00px;font-size:15.3px;line-height:15.3px;color:#262626;">*</span>
<span class="t" style="left:412.69px;top:498.00px;font-size:15.3px;line-height:15.3px;color:#262626;">*</span>
<span class="t" style="left:444.54px;top:498.00px;font-size:12.4px;line-height:12.4px;color:#262626;transform:scaleX(0.9278);">10.60.33.200</span>
<span class="t" style="left:527.05px;top:498.00px;font-size:12.4px;line-height:12.4px;color:#262626;transform:scaleX(0.9114);">9050</span>
<span class="t" style="left:617.39px;top:498.00px;font-size:15.3px;line-height:15.3px;color:#262626;">*</span>
<span class="t" style="left:672.15px;top:498.00px;font-size:12.4px;line-height:12.4px;color:#262626;transform:scaleX(0.8984);">none</span>
<span class="t" style="left:771.99px;top:498.00px;font-size:12.4px;line-height:12.4px;color:#262626;transform:scaleX(0.8980);">NAT</span>
<span class="t" style="left:131.72px;top:528.00px;font-size:12.4px;line-height:12.4px;color:#337ab7;transform:scaleX(0.9649);">1/3.43 MiB</span>
<span class="t" style="left:201.26px;top:528.00px;font-size:12.4px;line-height:12.4px;color:#262626;transform:scaleX(0.8937);">IPv4 TCP</span>
<span class="t" style="left:287.19px;top:528.00px;font-size:15.3px;line-height:15.3px;color:#262626;">*</span>
<span class="t" style="left:412.69px;top:528.00px;font-size:15.3px;line-height:15.3px;color:#262626;">*</span>
<span class="t" style="left:444.54px;top:528.00px;font-size:12.4px;line-height:12.4px;color:#262626;transform:scaleX(0.9278);">10.60.33.200</span>
<span class="t" style="left:527.05px;top:528.00px;font-size:12.4px;line-height:12.4px;color:#262626;transform:scaleX(0.9005);">3389 (MS RDP)</span>
<span class="t" style="left:617.39px;top:528.00px;font-size:15.3px;line-height:15.3px;color:#262626;">*</span>
<span class="t" style="left:672.15px;top:528.00px;font-size:12.4px;line-height:12.4px;color:#262626;transform:scaleX(0.8984);">none</span>
<span class="t" style="left:771.99px;top:528.00px;font-size:12.4px;line-height:12.4px;color:#262626;transform:scaleX(0.8980);">NAT</span>
<span class="t" style="left:131.83px;top:558.00px;font-size:12.4px;line-height:12.4px;color:#337ab7;transform:scaleX(0.9557);">0/0 B</span>
<span class="t" style="left:201.25px;top:558.00px;font-size:12.4px;line-height:12.4px;color:#262626;transform:scaleX(0.9065);">IPv4 TCP/UDP</span>
<span class="t" style="left:287.19px;top:558.00px;font-size:15.3px;line-height:15.3px;color:#262626;">*</span>
<span class="t" style="left:412.69px;top:558.00px;font-size:15.3px;line-height:15.3px;color:#262626;">*</span>
<span class="t" style="left:444.54px;top:558.00px;font-size:12.4px;line-height:12.4px;color:#262626;transform:scaleX(0.9278);">10.60.33.200</span>
<span class="t" style="left:527.04px;top:558.00px;font-size:12.4px;line-height:12.4px;color:#262626;transform:scaleX(0.9237);">80 (HTTP)</span>
<span class="t" style="left:617.39px;top:558.00px;font-size:15.3px;line-height:15.3px;color:#262626;">*</span>
<span class="t" style="left:672.15px;top:558.00px;font-size:12.4px;line-height:12.4px;color:#262626;transform:scaleX(0.8984);">none</span>
<span class="t" style="left:771.99px;top:558.00px;font-size:12.4px;line-height:12.4px;color:#262626;transform:scaleX(0.8980);">NAT</span>
<span class="t" style="left:131.81px;top:588.00px;font-size:12.4px;line-height:12.4px;color:#337ab7;transform:scaleX(0.9912);">0/0 B</span>
<span class="t" style="left:201.25px;top:588.00px;font-size:12.4px;line-height:12.4px;color:#262626;transform:scaleX(0.9065);">IPv4 TCP/UDP</span>
<span class="t" style="left:287.19px;top:588.00px;font-size:15.3px;line-height:15.3px;color:#262626;">*</span>
<span class="t" style="left:412.69px;top:588.00px;font-size:15.3px;line-height:15.3px;color:#262626;">*</span>
<span class="t" style="left:444.54px;top:588.00px;font-size:12.4px;line-height:12.4px;color:#262626;transform:scaleX(0.9278);">10.60.33.200</span>
<span class="t" style="left:527.04px;top:588.00px;font-size:12.4px;line-height:12.4px;color:#262626;transform:scaleX(0.9209);">443 (HTTPS)</span>
<span class="t" style="left:617.39px;top:588.00px;font-size:15.3px;line-height:15.3px;color:#262626;">*</span>
<span class="t" style="left:672.15px;top:588.00px;font-size:12.4px;line-height:12.4px;color:#262626;transform:scaleX(0.8984);">none</span>
<span class="t" style="left:771.99px;top:588.00px;font-size:12.4px;line-height:12.4px;color:#262626;transform:scaleX(0.8980);">NAT</span>
<span class="t" style="left:131.83px;top:618.00px;font-size:12.4px;line-height:12.4px;color:#337ab7;transform:scaleX(0.9557);">0/0 B</span>
<span class="t" style="left:201.25px;top:618.00px;font-size:12.4px;line-height:12.4px;color:#262626;transform:scaleX(0.9065);">IPv4 TCP/UDP</span>
<span class="t" style="left:287.19px;top:617.00px;font-size:15.3px;line-height:15.3px;color:#262626;">*</span>
<span class="t" style="left:412.69px;top:617.00px;font-size:15.3px;line-height:15.3px;color:#262626;">*</span>
<span class="t" style="left:444.54px;top:618.00px;font-size:12.4px;line-height:12.4px;color:#262626;transform:scaleX(0.9278);">10.60.33.200</span>
<span class="t" style="left:527.54px;top:618.00px;font-size:12.4px;line-height:12.4px;color:#262626;transform:scaleX(0.9215);">1433</span>
<span class="t" style="left:617.39px;top:617.00px;font-size:15.3px;line-height:15.3px;color:#262626;">*</span>
<span class="t" style="left:672.15px;top:618.00px;font-size:12.4px;line-height:12.4px;color:#262626;transform:scaleX(0.8984);">none</span>
<span class="t" style="left:771.99px;top:618.00px;font-size:12.4px;line-height:12.4px;color:#262626;transform:scaleX(0.8980);">NAT</span>
</div>
<div class="sec buttons">
<span class="t" style="left:601.99px;top:657.00px;font-size:11px;line-height:11px;color:#ffffff;-webkit-text-stroke:0.300px #fff;transform:scaleX(0.9413);">Add</span>
<span class="t" style="left:655.79px;top:657.00px;font-size:11px;line-height:11px;color:#ffffff;-webkit-text-stroke:0.300px #fff;transform:scaleX(0.9413);">Add</span>
<span class="t" style="left:709.60px;top:657.00px;font-size:11px;line-height:11px;color:#ffffff;-webkit-text-stroke:0.300px #fff;transform:scaleX(0.9057);">Delete</span>
<span class="t" style="left:774.09px;top:657.00px;font-size:11px;line-height:11px;color:#ffffff;-webkit-text-stroke:0.300px #fff;transform:scaleX(0.9353);">Toggle</span>
<span class="t" style="left:839.60px;top:657.00px;font-size:11px;line-height:11px;color:#ffffff;-webkit-text-stroke:0.300px #fff;transform:scaleX(0.9070);">Copy</span>
<span class="t" style="left:898.62px;top:657.00px;font-size:11px;line-height:11px;color:#ffffff;-webkit-text-stroke:0.300px #fff;transform:scaleX(0.8678);">Save</span>
<span class="t" style="left:955.60px;top:657.00px;font-size:11px;line-height:11px;color:#ffffff;-webkit-text-stroke:0.300px #fff;transform:scaleX(0.9066);">Separator</span>
</div>
<div class="b" style="left:178px;top:8px;width:19px;height:18px;background:linear-gradient(90deg,rgba(253,245,250,0),rgba(253,245,250,.95) 85%)"></div>
</body></html>
